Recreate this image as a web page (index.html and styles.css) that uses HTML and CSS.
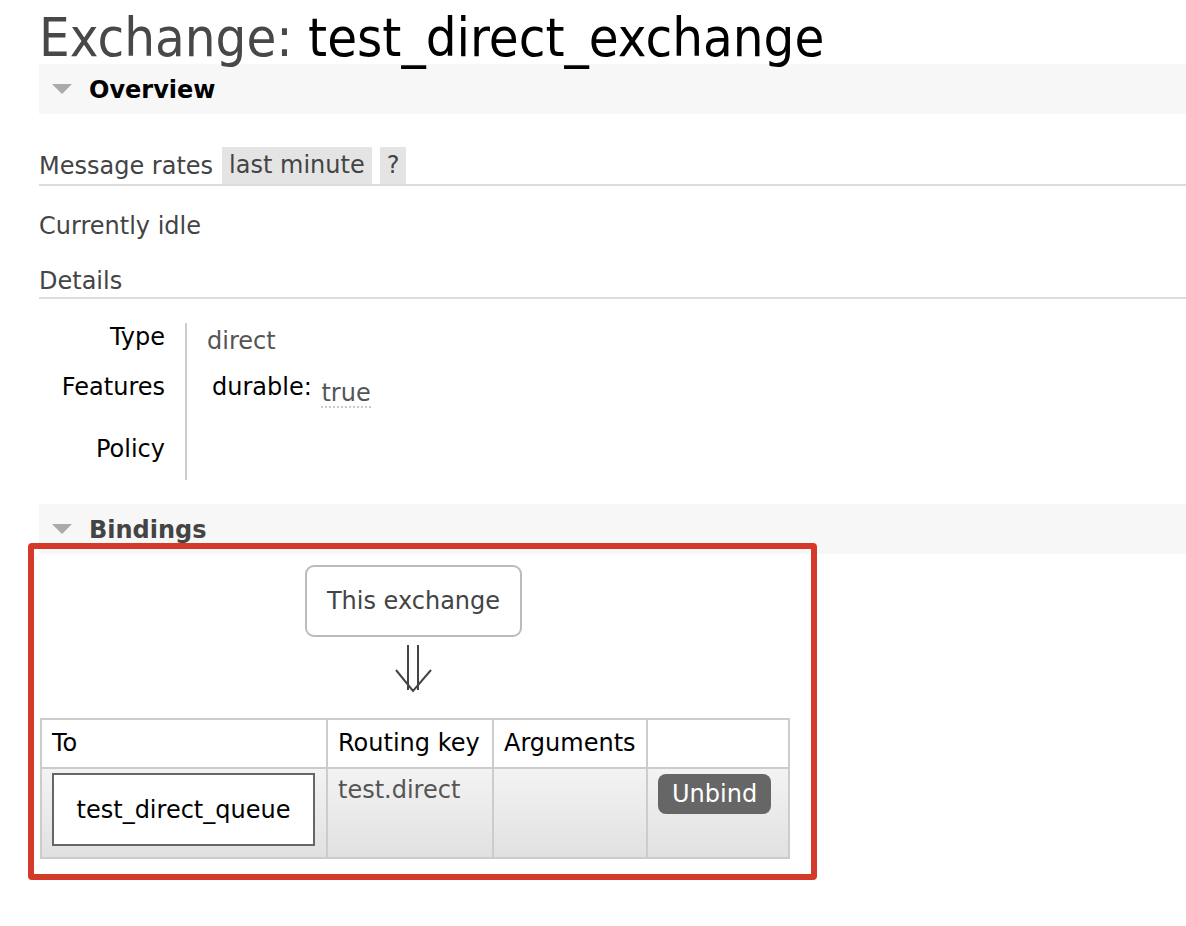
FILE: index.html
```html
<!DOCTYPE html>
<html>
<head>
<meta charset="utf-8">
<link rel="stylesheet" href="styles.css">
</head>
<body>
<h1 class="title"><span class="title-kind">Exchange: </span><span class="title-name">test_direct_exchange</span></h1>

<div class="section-head"><span class="tri"></span><span class="section-label">Overview</span></div>

<div class="rates-row">
  <span class="rates-label">Message rates</span>
  <span class="pill">last minute</span>
  <span class="pill">?</span>
</div>

<p class="idle">Currently idle</p>

<div class="details-title">Details</div>

<div class="details">
  <div class="labels">
    <div class="lbl lbl-type">Type</div>
    <div class="lbl lbl-features">Features</div>
    <div class="lbl lbl-policy">Policy</div>
  </div>
  <div class="values">
    <div class="val-type">direct</div>
    <div class="val-features"><span class="feat-key">durable:</span> <span class="feat-val">true</span></div>
  </div>
</div>

<div class="section-head bindings-head"><span class="tri"></span><span class="section-label label-grey">Bindings</span></div>

<div class="bindings">
  <div class="exchange-box">This exchange</div>
  <div class="arrow">
    <svg width="40" height="50" viewBox="0 0 40 50">
      <path d="M14 1 V46 M24 1 V46 M2 26 L19 47 L37 26" fill="none" stroke="#444" stroke-width="2"/>
    </svg>
  </div>
  <table class="btable">
    <tr class="hrow">
      <th class="c-to">To</th>
      <th class="c-key">Routing key</th>
      <th class="c-args">Arguments</th>
      <th class="c-act"></th>
    </tr>
    <tr class="drow">
      <td class="c-to"><div class="queue-box">test_direct_queue</div></td>
      <td class="c-key key-val">test.direct</td>
      <td class="c-args"></td>
      <td class="c-act"><span class="unbind">Unbind</span></td>
    </tr>
  </table>
  <div class="highlight"></div>
</div>
</body>
</html>
```

FILE: styles.css
```css
html, body {
  margin: 0;
  padding: 0;
  background: #fff;
}
body {
  padding-left: 39px;
  font-family: "DejaVu Sans", Verdana, sans-serif;
  font-size: 24px;
  color: #444;
  overflow: hidden;
}
.title {
  margin: 0;
  padding-top: 9px;
  height: 55px;
  font-family: "DejaVu Sans Condensed", "DejaVu Sans", sans-serif;
  font-stretch: condensed;
  font-weight: normal;
  font-size: 54px;
  line-height: 58px;
  white-space: nowrap;
}
.title-kind { color: #484848; }
.title-name { color: #000; }

.section-head {
  height: 50px;
  background: #f7f7f7;
  display: flex;
  align-items: center;
}
.tri {
  width: 0;
  height: 0;
  margin-left: 13px;
  margin-right: 17px;
  border-left: 10px solid transparent;
  border-right: 10px solid transparent;
  border-top: 10px solid #aaa;
}
.section-label {
  font-weight: bold;
  font-size: 24px;
  color: #000;
  position: relative;
  top: 1px;
}
.label-grey { color: #444; }

.rates-row {
  margin-top: 33px;
  display: flex;
  align-items: center;
  height: 37px;
  border-bottom: 2px solid #ddd;
}
.rates-label { margin-right: 9px; }
.pill {
  background: #e4e4e4;
  height: 37px;
  line-height: 37px;
  padding: 0 7px;
  margin-right: 8px;
}
.idle {
  margin: 25px 0 0;
  line-height: 30px;
}
.details-title {
  margin-top: 25px;
  line-height: 30px;
  padding-bottom: 1px;
  border-bottom: 2px solid #ddd;
}

.details {
  display: flex;
  margin-top: 24px;
}
.labels {
  width: 126px;
  text-align: right;
  color: #000;
  border-right: 2px solid #ccc;
  padding-right: 20px;
  height: 157px;
}
.lbl { line-height: 30px; }
.lbl-type { margin-top: -1px; }
.lbl-features { margin-top: 20px; }
.lbl-policy { margin-top: 32px; }
.values { padding-left: 20px; }
.val-type { line-height: 30px; margin-top: 3px; color: #555; }
.val-features { margin-top: 16px; line-height: 30px; padding-left: 5px; color: #000; }
.feat-val {
  color: #555;
  display: inline-block;
  line-height: 26px;
  margin-left: 2px;
  position: relative;
  top: 6px;
  border-bottom: 2px dotted #ccc;
}

.bindings-head { margin-top: 24px; }

.bindings {
  position: relative;
  padding-top: 11px;
  padding-bottom: 60px;
}
.exchange-box {
  margin-left: 266px;
  width: 217px;
  height: 72px;
  box-sizing: border-box;
  border: 2px solid #bbb;
  border-radius: 9px;
  display: flex;
  align-items: center;
  justify-content: center;
}
.arrow {
  margin-left: 355px;
  padding-top: 7px;
  height: 81px;
  box-sizing: border-box;
}
.arrow svg { display: block; }
.btable {
  border-collapse: collapse;
  margin-left: 1px;
  width: 750px;
}
.btable th, .btable td {
  border: 2px solid #ccc;
  text-align: left;
  font-weight: normal;
  vertical-align: top;
  padding: 0 10px;
}
.hrow th {
  height: 47px;
  line-height: 47px;
  color: #000;
  background: #fff;
}
.drow td {
  height: 80px;
  background: linear-gradient(#f3f3f3, #e1e1e1);
}
.c-to { width: 264px; }
.c-key { width: 144px; }
.c-args { width: 132px; }
.btable td.c-to { padding: 4px 10px; }
.queue-box {
  width: 263px;
  height: 73px;
  box-sizing: border-box;
  border: 2px solid #666;
  background: #fff;
  color: #000;
  display: flex;
  align-items: center;
  justify-content: center;
}
.key-val { color: #555; line-height: 38px; padding-top: 2px !important; }
.unbind {
  display: inline-block;
  margin-top: 5px;
  background: #666;
  color: #fff;
  border-radius: 8px;
  height: 40px;
  line-height: 40px;
  padding: 0 14px;
}
.highlight {
  position: absolute;
  left: -11px;
  top: -11px;
  width: 789px;
  height: 337px;
  box-sizing: border-box;
  border: 6px solid #d43a2a;
  border-radius: 4px;
  pointer-events: none;
}
```
